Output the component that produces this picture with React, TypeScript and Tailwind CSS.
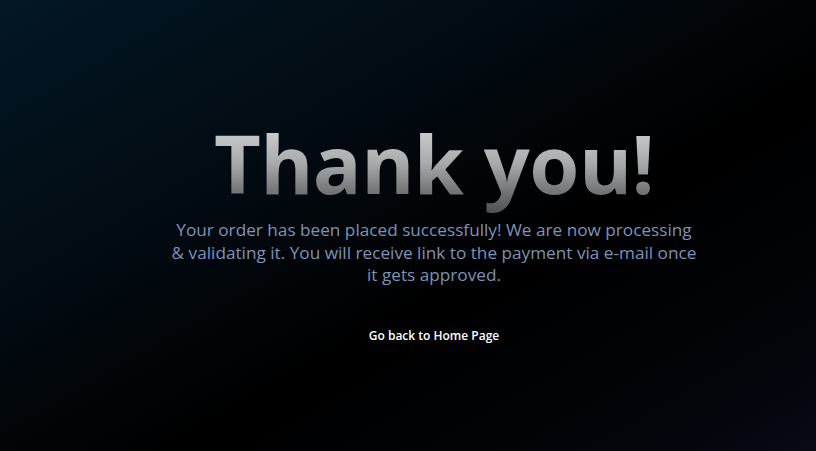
import React from 'react';

const font = { fontFamily: '"Open Sans", Inter, "Liberation Sans", sans-serif' };

const App: React.FC = () => {
  return (
    <div
      className="flex h-[451px] w-full flex-col items-center bg-[linear-gradient(150deg,#031725_0%,#020a11_35%,#000000_60%,#020409_85%,#070a14_100%)] pl-[52px] pt-[108px]"
      style={font}
    >
      {/* line box matches the font's content area so the gradient covers the whole glyphs */}
      <h1 className="bg-gradient-to-b from-[#e2e4e6] via-[#a9aaac] to-[#48484a] bg-clip-text text-[81px] font-bold leading-[110px] tracking-[-0.6px] text-transparent">
        Thank you!
      </h1>
      <p className="mt-[1px] text-center text-[17.2px] leading-[22.5px] text-[#7e93b6]">
        Your order has been placed successfully! We are now processing
        <br />
        &amp; validating it. You will receive link to the payment via e-mail once
        <br />
        it gets approved.
      </p>
      <a href="#" className="mt-[40px] text-[12px] font-semibold text-white">
        Go back to Home Page
      </a>
    </div>
  );
};

export default App;
